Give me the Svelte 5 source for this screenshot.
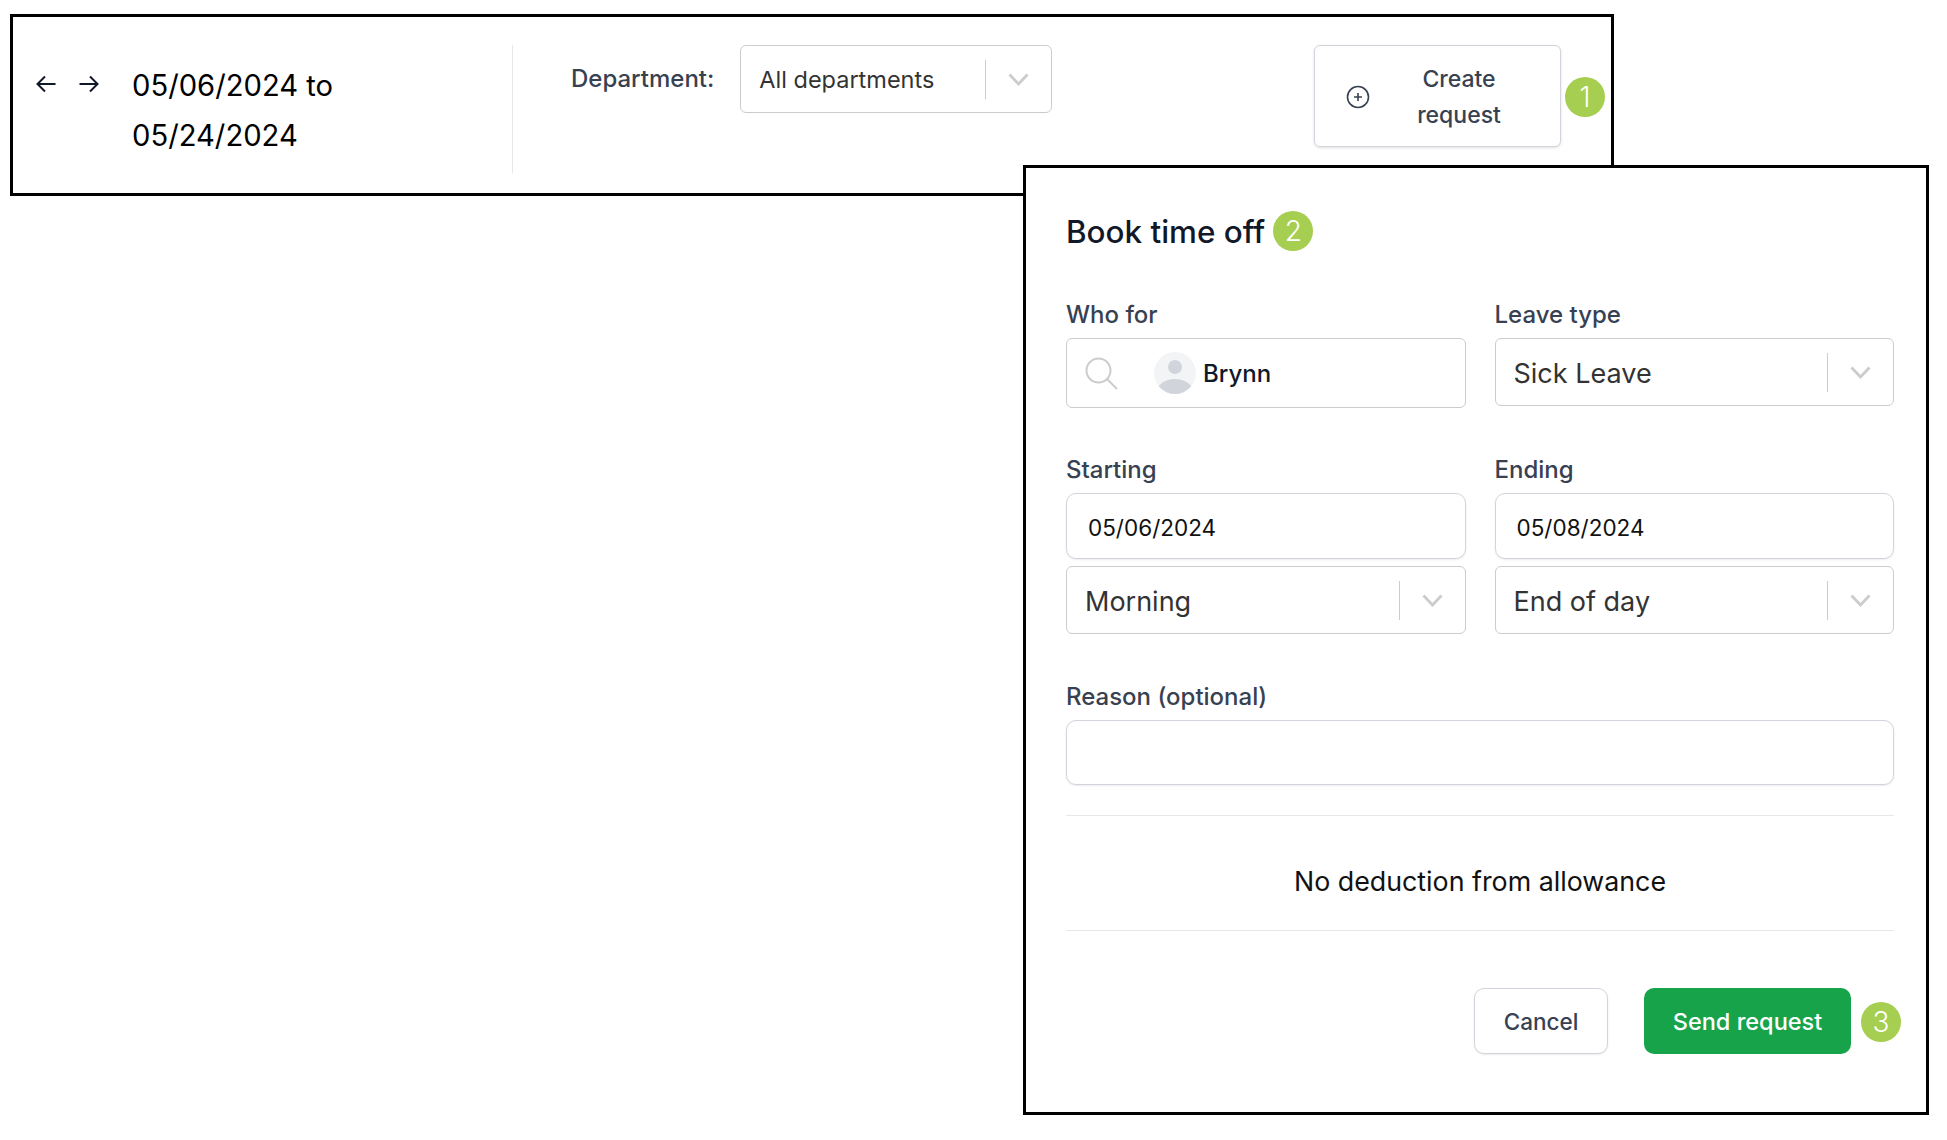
<script>
  const chevron = 'M1.5 1.5 L10.5 11 L19.5 1.5';
</script>

<div class="page">
  <header class="bar">
    <div class="range">
      <div class="arrows">
        <svg width="20" height="18" viewBox="0 0 20 18" fill="none" stroke="#111827" stroke-width="2"><path d="M19.5 9H1.5M9 1.5L1.5 9L9 16.5" /></svg>
        <svg width="20" height="18" viewBox="0 0 20 18" fill="none" stroke="#111827" stroke-width="2"><path d="M0.5 9H18.5M11 1.5L18.5 9L11 16.5" /></svg>
      </div>
      <div class="dates">05/06/2024 to 05/24/2024</div>
    </div>
    <div class="filter">
      <span class="dept">Department:</span>
      <div class="select dept-select">
        <span class="value small">All departments</span>
        <i class="sep"></i>
        <svg class="chev" width="21" height="13" viewBox="0 0 21 13" fill="none" stroke="#cccccc" stroke-width="2.8"><path d={chevron} /></svg>
      </div>
    </div>
    <button class="create">
      <svg width="24" height="24" viewBox="0 0 24 24" fill="none" stroke="#374151" stroke-width="1.6"><circle cx="12" cy="12" r="10.5" /><path d="M12 8v8M8 12h8" /></svg>
      <span>Create request</span>
    </button>
    <span class="badge">1</span>
  </header>

  <section class="modal">
    <h2>Book time off <span class="badge">2</span></h2>
    <div class="grid first">
      <div class="field">
        <span class="label">Who for</span>
        <div class="who">
          <svg width="33" height="33" viewBox="0 0 33 33" fill="none" stroke="#cccccc" stroke-width="2"><circle cx="13.5" cy="13.5" r="12" /><path d="M22 22L32 32" /></svg>
          <svg class="avatar" width="42" height="42" viewBox="0 0 42 42"><defs><clipPath id="av"><circle cx="21" cy="21" r="21" /></clipPath></defs><g clip-path="url(#av)"><rect width="42" height="42" fill="#f3f4f6" /><circle cx="21" cy="15" r="7" fill="#d1d5db" /><ellipse cx="21" cy="40" rx="18" ry="13" fill="#d1d5db" /></g></svg>
          <span class="brynn">Brynn</span>
        </div>
      </div>
      <div class="field">
        <span class="label">Leave type</span>
        <div class="select tall">
          <span class="value">Sick Leave</span>
          <i class="sep"></i>
          <svg class="chev" width="21" height="13" viewBox="0 0 21 13" fill="none" stroke="#cccccc" stroke-width="2.8"><path d={chevron} /></svg>
        </div>
      </div>
    </div>

    <div class="grid second">
      <div class="field">
        <span class="label">Starting</span>
        <div class="input date">05/06/2024</div>
        <div class="select tall lower">
          <span class="value">Morning</span>
          <i class="sep"></i>
          <svg class="chev" width="21" height="13" viewBox="0 0 21 13" fill="none" stroke="#cccccc" stroke-width="2.8"><path d={chevron} /></svg>
        </div>
      </div>
      <div class="field">
        <span class="label">Ending</span>
        <div class="input date">05/08/2024</div>
        <div class="select tall lower">
          <span class="value">End of day</span>
          <i class="sep"></i>
          <svg class="chev" width="21" height="13" viewBox="0 0 21 13" fill="none" stroke="#cccccc" stroke-width="2.8"><path d={chevron} /></svg>
        </div>
      </div>
    </div>

    <div class="field reason">
      <span class="label">Reason (optional)</span>
      <div class="input"></div>
    </div>

    <div class="allowance">No deduction from allowance</div>

    <footer>
      <button class="cancel">Cancel</button>
      <button class="send">Send request</button>
      <span class="badge">3</span>
    </footer>
  </section>
</div>

<style>
  :global(body) {
    margin: 0;
    background: #fff;
    font-family: Inter, "Liberation Sans", sans-serif;
  }
  .page {
    position: relative;
    width: 1947px;
    height: 1140px;
    padding: 14px 0 0 10px;
    box-sizing: border-box;
  }
  button {
    font-family: inherit;
    cursor: pointer;
  }
  .bar {
    box-sizing: border-box;
    width: 1604px;
    height: 182px;
    border: 3px solid #000;
    padding: 28px 6px 0 0;
    display: flex;
    align-items: flex-start;
    background: #fff;
  }
  .range {
    box-sizing: border-box;
    width: 500px;
    height: 128px;
    border-right: 1px solid #e5e7eb;
    display: flex;
    padding-left: 23px;
    align-items: flex-start;
  }
  .arrows {
    display: flex;
    gap: 23px;
    margin-top: 30px;
    width: 96px;
  }
  .dates {
    width: 260px;
    font-size: 29.2px;
    line-height: 50px;
    color: #000;
    margin-top: 16px;
  }
  .filter {
    display: flex;
    align-items: flex-start;
    margin-left: 58px;
    gap: 26px;
  }
  .dept {
    font-size: 24px;
    font-weight: 500;
    color: #374151;
    line-height: 32px;
    margin-top: 18px;
    white-space: nowrap;
  }
  .select {
    box-sizing: border-box;
    display: flex;
    align-items: center;
    border: 1px solid #cccccc;
    border-radius: 6px;
    background: #fff;
    padding: 0 22px 0 18px;
  }
  .dept-select {
    width: 312px;
    height: 68px;
  }
  .tall {
    height: 68px;
  }
  .value {
    flex: 1;
    font-size: 27px;
    color: #333;
    white-space: nowrap;
    padding-top: 2px;
  }
  .value.small {
    font-size: 23.5px;
    padding-top: 0;
  }
  .sep {
    width: 1px;
    height: 39px;
    background: #cccccc;
    margin-right: 22px;
  }
  .chev {
    flex: none;
  }
  .create {
    box-sizing: border-box;
    flex: none;
    width: 247px;
    height: 102px;
    margin-left: auto;
    margin-right: 4px;
    display: flex;
    align-items: center;
    padding: 2px 26px 0 31px;
    gap: 14px;
    background: #fff;
    border: 1px solid #d1d5db;
    border-radius: 6px;
    box-shadow: 0 1px 3px rgba(0, 0, 0, 0.12);
    font-size: 23px;
    font-weight: 500;
    line-height: 36px;
    color: #374151;
  }
  .create svg {
    flex: none;
  }
  .create span {
    flex: 1;
    text-align: center;
  }
  .badge {
    display: inline-flex;
    align-items: center;
    justify-content: center;
    flex: none;
    width: 40px;
    height: 40px;
    border-radius: 50%;
    background: #a6ce50;
    color: #fff;
    font-size: 28px;
    font-weight: 300;
    line-height: 1;
  }
  .bar > .badge {
    margin-top: 32px;
  }
  .modal {
    position: absolute;
    left: 1023px;
    top: 165px;
    box-sizing: border-box;
    width: 906px;
    height: 950px;
    border: 3px solid #000;
    background: #fff;
    padding: 44px 32px 0 40px;
  }
  h2 {
    display: flex;
    align-items: center;
    gap: 8px;
    margin: 0;
    height: 40px;
    font-size: 31.4px;
    font-weight: 500;
    color: #111827;
    white-space: nowrap;
  }
  h2 .badge {
    margin-top: -2px;
  }
  .grid {
    display: grid;
    grid-template-columns: 400px 399.5px;
    column-gap: 28.5px;
  }
  .first {
    margin-top: 47px;
  }
  .second {
    margin-top: 46px;
  }
  .field {
    display: flex;
    flex-direction: column;
  }
  .label {
    font-size: 24px;
    line-height: 32px;
    font-weight: 500;
    color: #374151;
    margin-bottom: 7px;
    white-space: nowrap;
  }
  .who {
    box-sizing: border-box;
    height: 70px;
    border: 1px solid #cccccc;
    border-radius: 6px;
    display: flex;
    align-items: center;
    padding-left: 18px;
  }
  .avatar {
    margin-left: 36px;
  }
  .brynn {
    margin-left: 7px;
    padding-top: 1px;
    font-size: 24px;
    font-weight: 500;
    color: #111827;
  }
  .input {
    box-sizing: border-box;
    height: 65px;
    border: 1px solid #d1d5db;
    border-radius: 10px;
    background: #fff;
    box-shadow: 0 1px 2px rgba(0, 0, 0, 0.08);
  }
  .date {
    display: flex;
    align-items: center;
    height: 66px;
    padding: 2px 0 0 21px;
    font-size: 22.5px;
    color: #111;
  }
  .lower {
    margin-top: 7px;
  }
  .reason {
    margin-top: 47px;
  }
  .allowance {
    box-sizing: border-box;
    margin-top: 30px;
    height: 116px;
    padding-top: 16px;
    border-top: 1px solid #e5e7eb;
    border-bottom: 1px solid #e5e7eb;
    display: flex;
    align-items: center;
    justify-content: center;
    font-size: 26.8px;
    color: #111;
  }
  footer {
    display: flex;
    align-items: center;
    margin-top: 57px;
    margin-right: -6px;
    padding-left: 408px;
  }
  .cancel {
    box-sizing: border-box;
    flex: none;
    width: 134px;
    height: 66px;
    padding-top: 2px;
    background: #fff;
    border: 1px solid #d1d5db;
    border-radius: 10px;
    box-shadow: 0 1px 2px rgba(0, 0, 0, 0.08);
    font-size: 22.5px;
    font-weight: 500;
    color: #374151;
  }
  .send {
    box-sizing: border-box;
    flex: none;
    width: 207px;
    height: 66px;
    padding-top: 2px;
    margin-left: 36px;
    background: #16a34a;
    border: none;
    border-radius: 10px;
    font-size: 23.5px;
    font-weight: 500;
    color: #fff;
  }
  footer .badge {
    margin-left: 10px;
    margin-top: 2px;
  }
</style>
